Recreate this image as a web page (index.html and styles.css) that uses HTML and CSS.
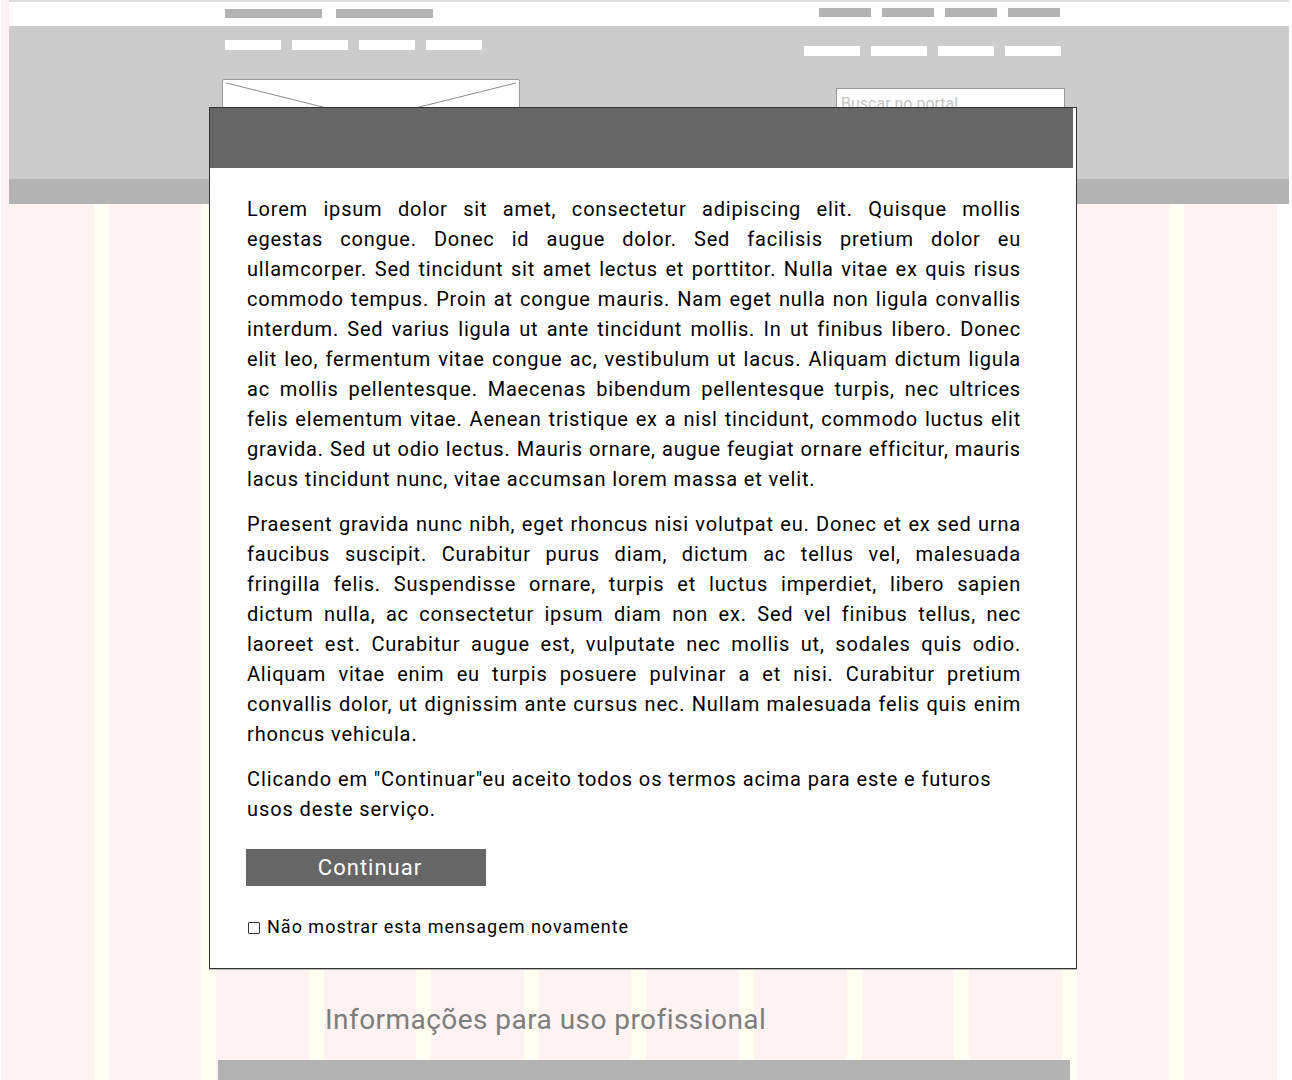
FILE: index.html
```html
<!DOCTYPE html>
<html lang="pt-BR">
<head>
<meta charset="utf-8">
<title>Portal</title>
<link rel="stylesheet" href="styles.css">
</head>
<body>
<div class="page">
  <header class="site-header">
    <div class="topbar">
      <div class="top-left">
        <span class="tbar wide"></span>
        <span class="tbar wide"></span>
      </div>
      <div class="top-right">
        <span class="tbar"></span>
        <span class="tbar"></span>
        <span class="tbar"></span>
        <span class="tbar"></span>
      </div>
    </div>
    <div class="masthead">
      <div class="mh-left">
        <nav class="navbars">
          <span></span><span></span><span></span><span></span>
        </nav>
        <div class="logo">
          <svg viewBox="0 0 298 80" preserveAspectRatio="none" width="100%" height="100%">
            <line x1="3" y1="3" x2="295" y2="77" />
            <line x1="295" y1="3" x2="3" y2="77" />
          </svg>
        </div>
      </div>
      <div class="mh-right">
        <nav class="navbars">
          <span></span><span></span><span></span><span></span>
        </nav>
        <div class="search">Buscar no portal</div>
      </div>
    </div>
    <div class="subbar"></div>
  </header>
  <main class="content">
    <h2 class="section-title">Informações para uso profissional</h2>
    <div class="section-bar"></div>
  </main>
</div>

<div class="modal">
  <div class="modal-header"></div>
  <div class="modal-body">
    <p class="justify">
      <span class="ln">Lorem ipsum dolor sit amet, consectetur adipiscing elit. Quisque mollis</span>
      <span class="ln">egestas congue. Donec id augue dolor. Sed facilisis pretium dolor eu</span>
      <span class="ln">ullamcorper. Sed tincidunt sit amet lectus et porttitor. Nulla vitae ex quis risus</span>
      <span class="ln">commodo tempus. Proin at congue mauris. Nam eget nulla non ligula convallis</span>
      <span class="ln">interdum. Sed varius ligula ut ante tincidunt mollis. In ut finibus libero. Donec</span>
      <span class="ln">elit leo, fermentum vitae congue ac, vestibulum ut lacus. Aliquam dictum ligula</span>
      <span class="ln">ac mollis pellentesque. Maecenas bibendum pellentesque turpis, nec ultrices</span>
      <span class="ln">felis elementum vitae. Aenean tristique ex a nisl tincidunt, commodo luctus elit</span>
      <span class="ln">gravida. Sed ut odio lectus. Mauris ornare, augue feugiat ornare efficitur, mauris</span>
      <span class="ln last">lacus tincidunt nunc, vitae accumsan lorem massa et velit.</span>
    </p>
    <p class="justify">
      <span class="ln">Praesent gravida nunc nibh, eget rhoncus nisi volutpat eu. Donec et ex sed urna</span>
      <span class="ln">faucibus suscipit. Curabitur purus diam, dictum ac tellus vel, malesuada</span>
      <span class="ln">fringilla felis. Suspendisse ornare, turpis et luctus imperdiet, libero sapien</span>
      <span class="ln">dictum nulla, ac consectetur ipsum diam non ex. Sed vel finibus tellus, nec</span>
      <span class="ln">laoreet est. Curabitur augue est, vulputate nec mollis ut, sodales quis odio.</span>
      <span class="ln">Aliquam vitae enim eu turpis posuere pulvinar a et nisi. Curabitur pretium</span>
      <span class="ln">convallis dolor, ut dignissim ante cursus nec. Nullam malesuada felis quis enim</span>
      <span class="ln last">rhoncus vehicula.</span>
    </p>
    <p class="terms">Clicando em "Continuar"eu aceito todos os termos acima para este e futuros usos deste serviço.</p>
    <button class="btn-continue" type="button">Continuar</button>
    <label class="dont-show"><span class="check"></span>Não mostrar esta mensagem novamente</label>
  </div>
</div>
</body>
</html>
```
FILE: styles.css
```css
html, body {
  margin: 0;
  padding: 0;
  background: #ffffff;
}

body {
  font-family: Roboto, "Liberation Sans", sans-serif;
  width: 1292px;
  min-height: 1080px;
  overflow: hidden;
}

.page {
  margin-left: 1px;
  width: 1276px;
  min-height: 1080px;
  background: repeating-linear-gradient(90deg,
    #fef3f2 0, #fef3f2 92.6px,
    #fffef0 92.6px, #fffef0 107.58px);
}

/* ---------- header ---------- */
.site-header {
  margin-left: 8px;
  width: 1280px;
}

.topbar {
  height: 24px;
  border-top: 2px solid #dcdcdc;
  background: #ffffff;
  display: flex;
  justify-content: space-between;
  align-items: flex-start;
  padding: 0 229px 0 216px;
}

.top-left {
  display: flex;
  gap: 14px;
  margin-top: 7px;
}

.top-right {
  display: flex;
  gap: 11px;
  margin-top: 6px;
}

.tbar {
  display: block;
  width: 52px;
  height: 9px;
  background: #b3b3b3;
}

.tbar.wide {
  width: 97px;
}

.masthead {
  height: 153px;
  background: #cccccc;
  display: flex;
  justify-content: space-between;
  padding: 0 223px 0 213px;
}

.mh-left {
  display: flex;
  flex-direction: column;
  align-items: flex-start;
}

.navbars {
  display: flex;
  gap: 11px;
}

.navbars span {
  display: block;
  width: 56px;
  height: 10px;
  background: #ffffff;
}

.mh-left .navbars {
  margin-top: 14px;
  margin-left: 3px;
}

.logo {
  margin-top: 29px;
  width: 296px;
  height: 78px;
  border: 1px solid #9a9a9a;
  border-radius: 2px;
  background: #ffffff;
}

.logo svg {
  display: block;
}

.logo line {
  stroke: #8a8a8a;
  stroke-width: 1;
}

.mh-right {
  display: flex;
  flex-direction: column;
  align-items: flex-end;
}

.mh-right .navbars {
  margin-top: 20px;
  margin-right: 5px;
}

.search {
  margin-top: 32px;
  margin-right: 1px;
  width: 223px;
  height: 28px;
  border: 1px solid #9a9a9a;
  background: #ffffff;
  padding-left: 4px;
  font-size: 16px;
  line-height: 30px;
  color: #c4c4c4;
}

.subbar {
  height: 25px;
  background: #b3b3b3;
}

/* ---------- content behind modal ---------- */
.content {
  padding: 798px 0 0 217px;
}

.section-title {
  margin: 0 0 0 107px;
  font-size: 28px;
  line-height: 36px;
  font-weight: 400;
  letter-spacing: 0.45px;
  color: #7d7d7d;
}

.section-bar {
  margin-top: 22px;
  width: 852px;
  height: 30px;
  background: #b3b3b3;
}

/* ---------- modal ---------- */
.modal {
  position: absolute;
  top: 107px;
  left: 209px;
  width: 866px;
  background: #ffffff;
  border: 1px solid #333333;
  box-shadow: 0 1px 0 rgba(0, 0, 0, 0.25);
}

.modal-header {
  height: 60px;
  margin-right: 3px;
  background: #666666;
}

.modal-body {
  padding: 26px 55px 29px 37px;
  font-size: 20px;
  line-height: 30px;
  letter-spacing: 0.8px;
  color: #000000;
}

.modal-body p {
  margin: 0 0 15px;
}

.ln {
  display: block;
  text-align: justify;
  text-align-last: justify;
}

.ln.last {
  text-align-last: left;
  letter-spacing: 0.88px;
}

.modal-body p.terms {
  margin-bottom: 0;
  text-align: left;
  letter-spacing: 0.9px;
}

.btn-continue {
  display: block;
  margin: 25px 0 0 -1px;
  width: 240px;
  height: 37px;
  padding: 0 0 0 8px;
  border: none;
  background: #666666;
  color: #ffffff;
  font-family: Roboto, "Liberation Sans", sans-serif;
  font-size: 22px;
  line-height: 37px;
  letter-spacing: 1px;
  text-align: center;
}

.dont-show {
  display: flex;
  align-items: center;
  margin-top: 29px;
  font-size: 18px;
  line-height: 24px;
  letter-spacing: 1px;
  color: #000000;
}

.check {
  display: inline-block;
  width: 10px;
  height: 10px;
  margin: 1px 7px 0 1px;
  border: 1px solid #333333;
  border-radius: 1px;
  background: #ffffff;
}
```
